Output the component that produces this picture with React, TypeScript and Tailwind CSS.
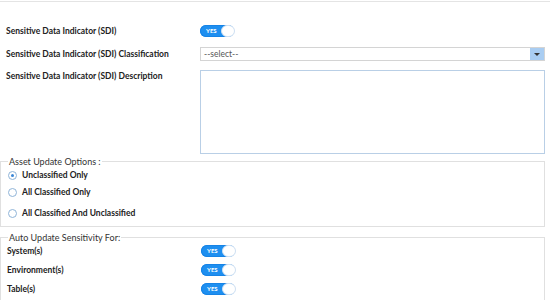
import React from "react";

const Toggle = () => (
  <div className="flex h-[12px] w-[34px] items-center rounded-full bg-[#1e8ff0] pl-[6px] shadow-[inset_0_0_0_1px_#1683e6]">
    <span className="text-[6px] font-bold leading-none text-white">YES</span>
    <span className="ml-auto mr-[-1px] h-[12px] w-[14px] rounded-full border border-[#cfe0f2] bg-white" />
  </div>
);

const Radio = ({ checked }: { checked?: boolean }) => (
  <span className="flex h-[9px] w-[9px] items-center justify-center rounded-full border border-[#8fb4d8] bg-white">
    {checked && <span className="h-[3px] w-[3px] rounded-full bg-[#3a86d6]" />}
  </span>
);

const label = "text-[8.5px] font-bold leading-none";

const App = () => {
  return (
    <main
      className="h-[300px] w-[550px] overflow-hidden bg-white text-[#222]"
      style={{ fontFamily: "Lato, 'Open Sans', sans-serif" }}
    >
      <div className="h-[2px] border-b border-[#e4e4e4]" />
      <section className="pl-[6px] pr-[5px] pt-[22px]">
        <div className="flex h-[14px] items-center">
          <label className={`w-[194px] ${label}`}>Sensitive Data Indicator (SDI)</label>
          <Toggle />
        </div>
        <div className="mt-[9px] flex h-[14px] items-center">
          <label className={`w-[194px] ${label}`}>Sensitive Data Indicator (SDI) Classification</label>
          <div className="flex h-[14px] flex-1 items-center border border-[#d4d4d4]">
            <span className="pl-[3px] text-[8.5px] leading-none text-[#555]">--select--</span>
            <span className="ml-auto flex h-full w-[14px] items-center justify-center bg-[#a9cdf2]">
              <span className="h-0 w-0 border-x-[3px] border-t-[3px] border-x-transparent border-t-[#333]" />
            </span>
          </div>
        </div>
        <div className="mt-[9px] flex items-start">
          <label className={`w-[194px] pt-[2px] ${label}`}>Sensitive Data Indicator (SDI) Description</label>
          <div className="h-[84px] flex-1 border border-[#b9cfe6]" />
        </div>
      </section>
      <fieldset className="mr-[5px] mt-[3px] h-[70px] border border-[#e0e0e0] pl-[7px]">
        <legend className="px-[1px] text-[9px] leading-none text-[#333]">Asset Update Options :</legend>
        <div className={`mt-[4px] flex h-[10px] items-center gap-[5px] ${label}`}>
          <Radio checked />
          Unclassified Only
        </div>
        <div className={`mt-[7px] flex h-[10px] items-center gap-[5px] ${label}`}>
          <Radio />
          All Classified Only
        </div>
        <div className={`mt-[11px] flex h-[10px] items-center gap-[5px] ${label}`}>
          <Radio />
          All Classified And Unclassified
        </div>
      </fieldset>
      <fieldset className="mr-[5px] mt-[6px] h-[80px] border border-[#e0e0e0] pl-[6px]">
        <legend className="ml-[1px] px-[1px] text-[9px] leading-none text-[#333]">Auto Update Sensitivity For:</legend>
        <div className="mt-[3px] flex h-[12px] items-center">
          <span className={`w-[194px] ${label}`}>System(s)</span>
          <Toggle />
        </div>
        <div className="mt-[7px] flex h-[12px] items-center">
          <span className={`w-[194px] ${label}`}>Environment(s)</span>
          <Toggle />
        </div>
        <div className="mt-[7px] flex h-[12px] items-center">
          <span className={`w-[194px] ${label}`}>Table(s)</span>
          <Toggle />
        </div>
      </fieldset>
    </main>
  );
};

export default App;
